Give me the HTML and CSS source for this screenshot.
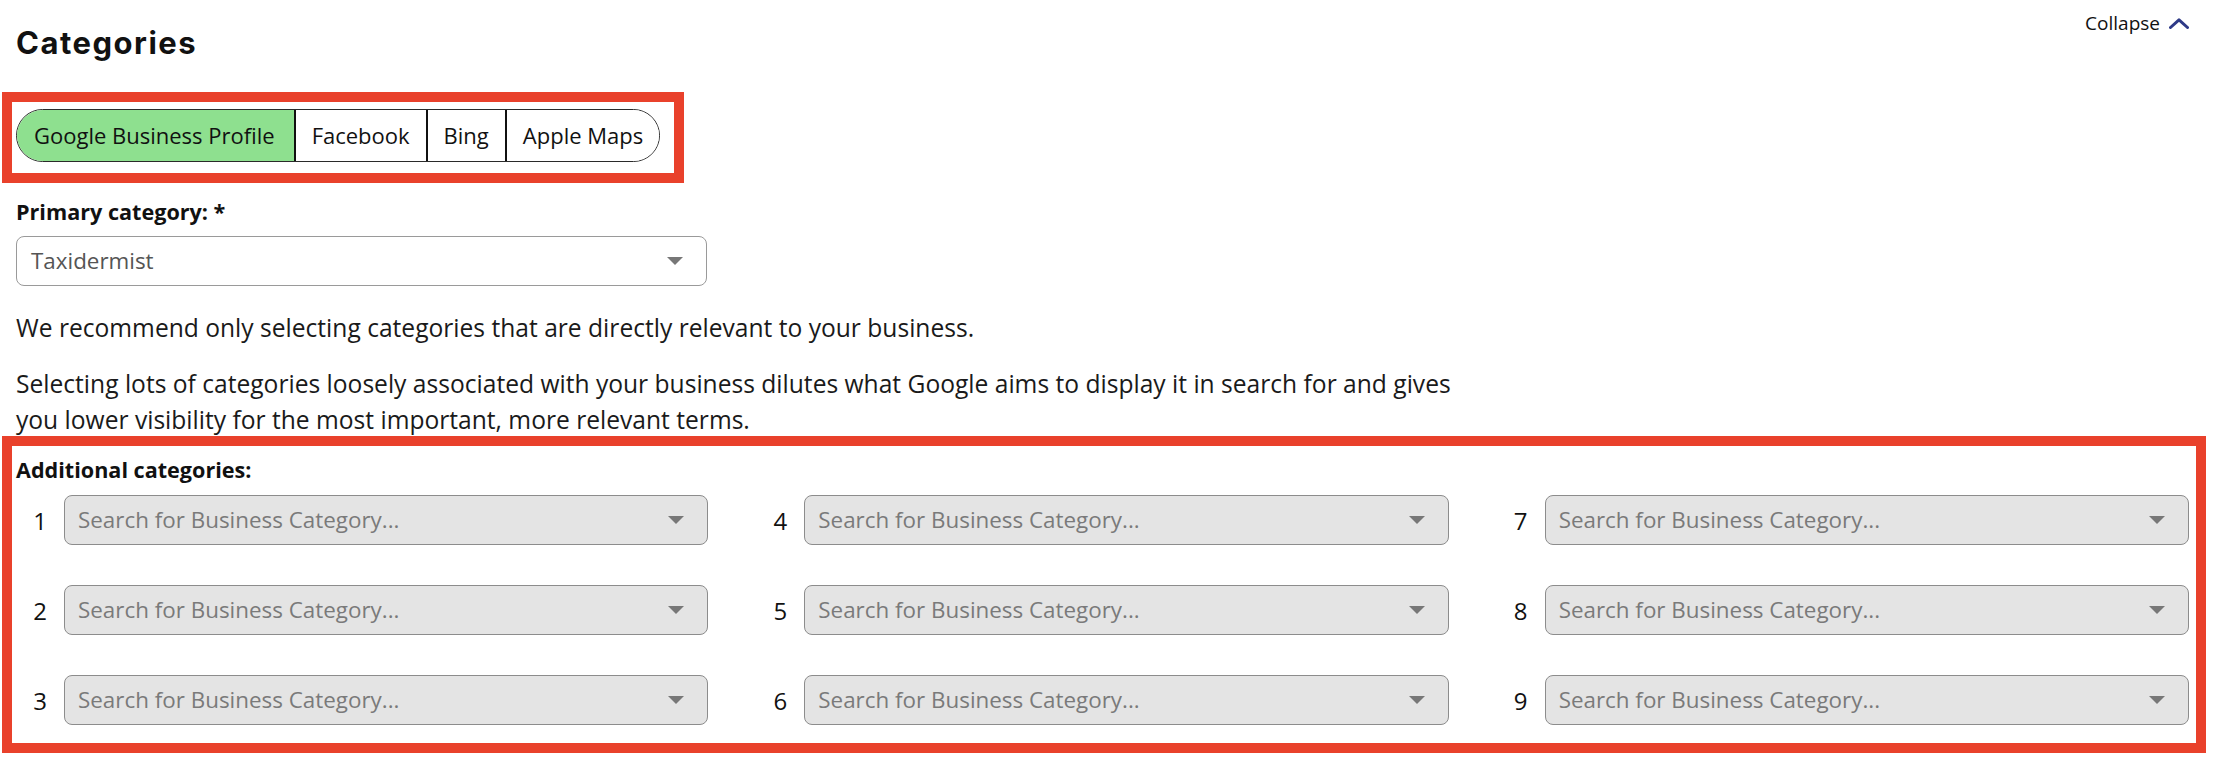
FILE: index.html
```html
<!DOCTYPE html>
<html lang="en">
<head>
<meta charset="utf-8">
<title>Categories</title>
<link rel="stylesheet" href="styles.css">
</head>
<body>
<div class="page">
  <header class="section-head">
    <h2 class="title">Categories</h2>
    <button class="collapse" type="button">Collapse
      <svg class="chevron" width="20" height="11" viewBox="0 0 20 11" aria-hidden="true"><polyline points="1.5,9.5 10,1.8 18.5,9.5" fill="none" stroke="#2e3a87" stroke-width="3" stroke-linecap="round" stroke-linejoin="round"/></svg>
    </button>
  </header>

  <div class="highlight highlight-tabs">
    <div class="segmented">
      <button class="seg seg-active" type="button">Google Business Profile</button>
      <button class="seg" type="button">Facebook</button>
      <button class="seg" type="button">Bing</button>
      <button class="seg" type="button">Apple Maps</button>
    </div>
  </div>

  <div class="field-label primary-label">Primary category: *</div>
  <div class="select select-primary">
    <span class="select-value">Taxidermist</span>
    <svg class="caret" width="16" height="8" viewBox="0 0 16 8" aria-hidden="true"><polygon points="0,0 16,0 8,8" fill="#777"/></svg>
  </div>

  <p class="note note-first">We recommend only selecting categories that are directly relevant to your business.</p>
  <p class="note">Selecting lots of categories loosely associated with your business dilutes what Google aims to display it in search for and gives you lower visibility for the most important, more relevant terms.</p>

  <div class="highlight highlight-extra">
    <div class="field-label">Additional categories:</div>
    <div class="extra-grid">
      <div class="extra-item"><span class="num">1</span><div class="select select-empty"><span class="placeholder">Search for Business Category...</span><svg class="caret" width="16" height="8" viewBox="0 0 16 8" aria-hidden="true"><polygon points="0,0 16,0 8,8" fill="#777"/></svg></div></div>
      <div class="extra-item"><span class="num">2</span><div class="select select-empty"><span class="placeholder">Search for Business Category...</span><svg class="caret" width="16" height="8" viewBox="0 0 16 8" aria-hidden="true"><polygon points="0,0 16,0 8,8" fill="#777"/></svg></div></div>
      <div class="extra-item"><span class="num">3</span><div class="select select-empty"><span class="placeholder">Search for Business Category...</span><svg class="caret" width="16" height="8" viewBox="0 0 16 8" aria-hidden="true"><polygon points="0,0 16,0 8,8" fill="#777"/></svg></div></div>
      <div class="extra-item"><span class="num">4</span><div class="select select-empty"><span class="placeholder">Search for Business Category...</span><svg class="caret" width="16" height="8" viewBox="0 0 16 8" aria-hidden="true"><polygon points="0,0 16,0 8,8" fill="#777"/></svg></div></div>
      <div class="extra-item"><span class="num">5</span><div class="select select-empty"><span class="placeholder">Search for Business Category...</span><svg class="caret" width="16" height="8" viewBox="0 0 16 8" aria-hidden="true"><polygon points="0,0 16,0 8,8" fill="#777"/></svg></div></div>
      <div class="extra-item"><span class="num">6</span><div class="select select-empty"><span class="placeholder">Search for Business Category...</span><svg class="caret" width="16" height="8" viewBox="0 0 16 8" aria-hidden="true"><polygon points="0,0 16,0 8,8" fill="#777"/></svg></div></div>
      <div class="extra-item"><span class="num">7</span><div class="select select-empty"><span class="placeholder">Search for Business Category...</span><svg class="caret" width="16" height="8" viewBox="0 0 16 8" aria-hidden="true"><polygon points="0,0 16,0 8,8" fill="#777"/></svg></div></div>
      <div class="extra-item"><span class="num">8</span><div class="select select-empty"><span class="placeholder">Search for Business Category...</span><svg class="caret" width="16" height="8" viewBox="0 0 16 8" aria-hidden="true"><polygon points="0,0 16,0 8,8" fill="#777"/></svg></div></div>
      <div class="extra-item"><span class="num">9</span><div class="select select-empty"><span class="placeholder">Search for Business Category...</span><svg class="caret" width="16" height="8" viewBox="0 0 16 8" aria-hidden="true"><polygon points="0,0 16,0 8,8" fill="#777"/></svg></div></div>
    </div>
  </div>
</div>
</body>
</html>
```
FILE: styles.css
```css
* { box-sizing: border-box; }

body {
  margin: 0;
  background: #fff;
  color: #111;
  font-family: "Open Sans", "Noto Sans", sans-serif;
}

.page {
  padding: 0 27px 0 16px;
}

.section-head {
  display: flex;
  justify-content: space-between;
  align-items: flex-start;
}

.title {
  margin: 25px 0 0;
  font-family: Inter, "Noto Sans", sans-serif;
  font-weight: 700;
  font-size: 31px;
  line-height: 36px;
  letter-spacing: 1.5px;
  color: #111;
}

.collapse {
  margin-top: 11px;
  display: flex;
  align-items: center;
  gap: 9px;
  padding: 0;
  border: 0;
  background: none;
  font-family: "Open Sans", sans-serif;
  font-size: 19px;
  line-height: 24px;
  color: #111;
}

.chevron { display: block; }

.highlight {
  border: 10px solid #e9412b;
}

.highlight-tabs {
  width: fit-content;
  margin: 31px 0 0 -14px;
  padding: 7px 14px 11px 4px;
}

.segmented {
  display: flex;
  border: 1px solid #2a2a2a;
  border-radius: 27px;
  overflow: hidden;
}

.seg {
  padding: 10px 16px;
  border: 0;
  border-left: 2px solid #111;
  background: #fff;
  font-family: "Open Sans", sans-serif;
  font-size: 22px;
  line-height: 31px;
  color: #111;
}

.seg:first-child {
  border-left: 0;
  padding-left: 17px;
  padding-right: 19px;
}

.seg-active {
  background: #8ee08f;
}

.field-label {
  font-weight: 700;
  font-size: 21.6px;
  line-height: 27px;
  color: #111;
}

.primary-label {
  margin-top: 15px;
}

.select {
  display: flex;
  align-items: center;
  justify-content: space-between;
  height: 50px;
  border: 1px solid #9a9a9a;
  border-radius: 8px;
  padding: 0 23px 0 14px;
  font-size: 22.4px;
  line-height: 30px;
}

.caret { display: block; flex: none; }

.select-primary {
  width: 691px;
  margin-top: 11px;
  background: #fff;
}

.select-value { color: #555; }

.note {
  margin: 20px 0 0;
  max-width: 1468px;
  font-size: 24.6px;
  line-height: 36px;
  color: #1a1a1a;
}

.note-first {
  margin-top: 24px;
}

.highlight-extra {
  margin: -2px -17px 0 -14px;
  padding: 10px 7px 18px 4px;
}

.extra-grid {
  margin-top: 12px;
  display: grid;
  grid-template-columns: repeat(3, 1fr);
  grid-template-rows: repeat(3, 50px);
  grid-auto-flow: column;
  column-gap: 48px;
  row-gap: 40px;
}

.extra-item {
  display: flex;
  align-items: center;
  min-width: 0;
}

.num {
  flex: none;
  width: 48px;
  text-align: center;
  font-size: 24px;
  color: #111;
}

.select-empty {
  flex: 1;
  min-width: 0;
  background: #e4e4e4;
  border-color: #8c8c8c;
  padding-left: 13px;
}

.placeholder { color: #7a7a7a; }
```
